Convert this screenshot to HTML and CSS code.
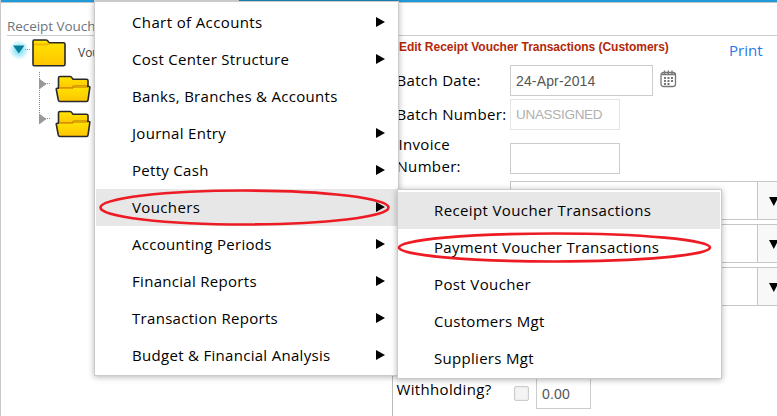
FILE: index.html
```html
<!DOCTYPE html>
<html lang="en">
<head>
<meta charset="utf-8">
<title>Receipt Vouchers</title>
<link rel="stylesheet" href="styles.css">
</head>
<body>
<div class="page">
  <header class="topbar"></header>
  <div class="heading"><span>Receipt Vouchers</span></div>
  <div class="columns">
    <aside class="tree">
      <div class="node root">
        <svg class="toggle" width="28" height="28" viewBox="0 0 28 28"><defs><radialGradient id="glow"><stop offset="0.3" stop-color="#8fe4f7"/><stop offset="1" stop-color="#8fe4f7" stop-opacity="0"/></radialGradient></defs><circle cx="14" cy="14" r="10" fill="url(#glow)"/><path d="M8 9.500h11.500l-5.700 8z" fill="#087f9c"/><path d="M20 13.500h6" stroke="#999" stroke-dasharray="1 1"/></svg>
        <svg class="folder" width="34" height="28" viewBox="0 0 34 28"><defs><linearGradient id="gold" x1="0" y1="0" x2="0" y2="1"><stop offset="0" stop-color="#ffe500"/><stop offset="1" stop-color="#ffc400"/></linearGradient></defs><path d="M2 1h12q1.500 0 2 1.200l1 1.600h14.500q1.500 0 1.500 1.500v20q0 1.500-1.500 1.500H2Q1 26.800 1 25V2.500Q1 1 2 1z" fill="url(#gold)" stroke="#292929" stroke-width="1.600"/><path d="M2 5.500h13l2-1" stroke="#f5b800" fill="none" stroke-width="2"/></svg>
        <span>Vouchers</span>
      </div>
      <div class="branch">
        <div class="node child"><svg width="16" height="16" viewBox="0 0 16 16"><path d="M0 2.500l7.500 5.500-7.500 5.500z" fill="#999"/><path d="M6 7.500h6" stroke="#888" stroke-dasharray="1 1"/></svg><svg class="open" width="36" height="28" viewBox="0 0 36 28"><path d="M3.500 14V3q0-1.500 1.500-1.500h10q1.200 0 2 1.400l1 1.300h13.500q1.500 0 1.500 1.500V14z" fill="url(#gold)" stroke="#292929" stroke-width="1.600"/><path d="M1.200 14q0-.8.800-.8h14.300l2.700-1.700h15q1 0 .8 1.200l-1.700 12q-.2 1.800-1.500 1.800H5q-1.300 0-1.700-1.500z" fill="url(#gold)" stroke="#292929" stroke-width="1.600"/><path d="M4 13.200h12.300l2.700-1.700h13" stroke="#ee9f00" fill="none" stroke-width="1.700"/></svg></div>
        <div class="node child"><svg width="16" height="16" viewBox="0 0 16 16"><path d="M0 2.500l7.500 5.500-7.500 5.500z" fill="#999"/><path d="M6 7.500h6" stroke="#888" stroke-dasharray="1 1"/></svg><svg class="open" width="36" height="28" viewBox="0 0 36 28"><path d="M3.500 14V3q0-1.500 1.500-1.500h10q1.200 0 2 1.400l1 1.300h13.500q1.500 0 1.500 1.500V14z" fill="url(#gold)" stroke="#292929" stroke-width="1.600"/><path d="M1.200 14q0-.8.800-.8h14.300l2.700-1.700h15q1 0 .8 1.200l-1.700 12q-.2 1.800-1.500 1.800H5q-1.300 0-1.700-1.500z" fill="url(#gold)" stroke="#292929" stroke-width="1.600"/><path d="M4 13.200h12.300l2.700-1.700h13" stroke="#ee9f00" fill="none" stroke-width="1.700"/></svg></div>
      </div>
    </aside>
    <main class="form">
      <div class="titlebar"><h1>Edit Receipt Voucher Transactions (Customers)</h1><a class="print">Print</a></div>
      <div class="row date"><label>Batch Date:</label><div class="field wide">24-Apr-2014</div>
        <svg class="calendar" width="17" height="18" viewBox="0 0 17 18"><rect x="1" y="2.500" width="14.500" height="14" rx="2.500" fill="#fff" stroke="#777" stroke-width="1.300"/><path d="M2 4.500h13" stroke="#777" stroke-width="1.500"/><path d="M4.500 .5v4M8.300 .5v4M12 .5v4" stroke="#777" stroke-width="1.300"/><path d="M4 8h9M4 11h9M4 14h6" stroke="#777" stroke-width="1.800" stroke-dasharray="2 1.500"/></svg></div>
      <div class="row number"><label>Batch Number:</label><div class="field disabled">UNASSIGNED</div></div>
      <div class="row invoice"><label><span class="first-line">Invoice</span><br>Number:</label><div class="field"></div></div>
      <div class="selects">
        <div class="select"><i><svg width="11" height="9"><path d="M0 0h9.500L4.800 9z"/></svg></i></div>
        <div class="select"><i><svg width="11" height="9"><path d="M0 0h9.500L4.800 9z"/></svg></i></div>
        <div class="select"><i><svg width="11" height="9"><path d="M0 0h9.500L4.800 9z"/></svg></i></div>
      </div>
      <div class="row withholding"><label>Withholding?</label><span class="check"></span><div class="field amount">0.00</div></div>
    </main>
  </div>
</div>

<nav class="menu main-menu">
  <div class="item"><span class="wider">Chart of Accounts</span><svg class="arrow" width="9" height="10"><path d="M0 0l9 5-9 5z"/></svg></div>
  <div class="item"><span>Cost Center Structure</span><svg class="arrow" width="9" height="10"><path d="M0 0l9 5-9 5z"/></svg></div>
  <div class="item"><span>Banks, Branches &amp; Accounts</span></div>
  <div class="item"><span>Journal Entry</span><svg class="arrow" width="9" height="10"><path d="M0 0l9 5-9 5z"/></svg></div>
  <div class="item"><span>Petty Cash</span><svg class="arrow" width="9" height="10"><path d="M0 0l9 5-9 5z"/></svg></div>
  <div class="item active"><span class="wider">Vouchers</span><svg class="arrow" width="9" height="10"><path d="M0 0l9 5-9 5z"/></svg></div>
  <div class="item"><span>Accounting Periods</span><svg class="arrow" width="9" height="10"><path d="M0 0l9 5-9 5z"/></svg></div>
  <div class="item"><span>Financial Reports</span><svg class="arrow" width="9" height="10"><path d="M0 0l9 5-9 5z"/></svg></div>
  <div class="item"><span>Transaction Reports</span><svg class="arrow" width="9" height="10"><path d="M0 0l9 5-9 5z"/></svg></div>
  <div class="item"><span>Budget &amp; Financial Analysis</span><svg class="arrow" width="9" height="10"><path d="M0 0l9 5-9 5z"/></svg></div>
</nav>
<nav class="menu sub-menu">
  <div class="item active"><span class="wider">Receipt Voucher Transactions</span></div>
  <div class="item"><span>Payment Voucher Transactions</span></div>
  <div class="item"><span class="wider">Post Voucher</span></div>
  <div class="item"><span>Customers Mgt</span></div>
  <div class="item"><span>Suppliers Mgt</span></div>
</nav>
<svg class="marks" width="777" height="416" fill="none" stroke="#ed1c24" stroke-width="2.700"><ellipse cx="244.500" cy="207.500" rx="144" ry="17"/><ellipse cx="554.500" cy="247.500" rx="155.500" ry="14"/></svg>
</body>
</html>
```

FILE: styles.css
```css
* { box-sizing: border-box; }
body {
  margin: 0;
  overflow: hidden;
  background: #fff;
  color: #000;
  font: 15px/22px "Open Sans", sans-serif;
}
svg { display: block; flex: none; }
.page { width: 777px; height: 416px; border-left: 1px solid #c8c8c8; }
.topbar {
  height: 3px;
  border-bottom: 1px solid #b9c6cc;
  background: linear-gradient(90deg, #219ad8 0 93px, #ddd 93px 238px, #1d86bd 238px 397px, #219ad8 397px);
}
.heading {
  height: 33px;
  margin-left: 6px;
  padding-top: 12px;
  border-bottom: 1px solid #ccc;
  color: #6d747c;
  font-size: 13.5px;
  letter-spacing: -.05px;
  line-height: 22px;
  white-space: nowrap;
}
.columns { display: flex; height: 380px; }
.tree { width: 391px; font-size: 12px; }
.node { display: flex; align-items: center; }
.root { height: 34px; padding-left: 4px; color: #444; }
.toggle { margin-top: -7px; }
.folder { margin: 0 12px 0 -1px; }
.branch {
  height: 54px;
  margin-left: 38px;
  background: repeating-linear-gradient(#888 0 1px, transparent 1px 2px) 0 2px / 1px 100% no-repeat;
}
.child { height: 35px; }
.child > svg:first-child { margin-top: -7px; }
.child .open { margin-top: 3px; }
.form { width: 385px; border-left: 1px solid #bbb; padding-left: 3px; }
.titlebar { display: flex; height: 29px; padding-top: 1px; }
h1 {
  width: 333px;
  margin: 0;
  padding-left: 3px;
  color: #b32808;
  font: bold 12px/21px "Liberation Sans", sans-serif;
  letter-spacing: -.03px;
  white-space: nowrap;
}
.print { color: #2878e8; line-height: 26px; }
.row { display: flex; align-items: center; }
.row label { width: 114px; padding: 0 0 1px .5px; letter-spacing: .33px; line-height: 22px; white-space: nowrap; }
.first-line { margin-left: 2px; }
.field {
  width: 110px;
  height: 31px;
  padding-left: 5px;
  border: 1px solid #ccc;
  color: #555;
  font: 14px/30px "Liberation Sans", sans-serif;
  letter-spacing: .15px;
}
.wide { width: 143px; }
.disabled { color: #b0b0b0; border-color: #e4e4e4; font-size: 13.5px; letter-spacing: -.3px; }
.date { height: 31px; }
.calendar { margin: -3px 0 0 7px; }
.number { height: 31px; margin-top: 3px; }
.invoice { height: 44px; margin-top: 4px; }
.invoice label { padding-bottom: 3px; }
.invoice .field { margin-top: 5px; }
.selects { display: grid; gap: 4px; margin: 3px 0 0 114px; }
.select { display: flex; justify-content: flex-end; height: 39px; border: 1px solid #c6c6c6; border-right: 0; }
.select i { width: 20px; overflow: hidden; border-left: 1px solid #c6c6c6; background: #f8f8f8; padding: 15px 0 0 11px; }
.withholding { margin-top: 72px; height: 31px; }
.withholding label { width: 118px; margin-top: -8px; }
.check { width: 15px; height: 15px; margin-right: 7px; border: 1px solid #ccc; border-radius: 2px; background: #f4f4f4; box-shadow: inset 0 0 2px #ddd; }
.amount { width: 55px; }
.menu { position: absolute; padding: 2px 0 0 1px; border: 1px solid #ccc; background: #fff; box-shadow: 0 1px 6px rgba(0, 0, 0, .3); }
.main-menu { left: 94px; top: 1px; width: 305px; height: 375px; }
.sub-menu { left: 397px; top: 189px; width: 325px; height: 190px; padding: 2px 1px 0 0; }
.item { display: flex; align-items: center; justify-content: space-between; height: 37px; padding: 0 13px 0 36px; white-space: nowrap; }
.item > span { padding-bottom: 2px; letter-spacing: .3px; }
.item > .wider { letter-spacing: .38px; }
.item .arrow { margin-bottom: 1px; }
.item.active { background: #e7e7e7; }
.marks { position: absolute; left: 0; top: 0; pointer-events: none; }
```
